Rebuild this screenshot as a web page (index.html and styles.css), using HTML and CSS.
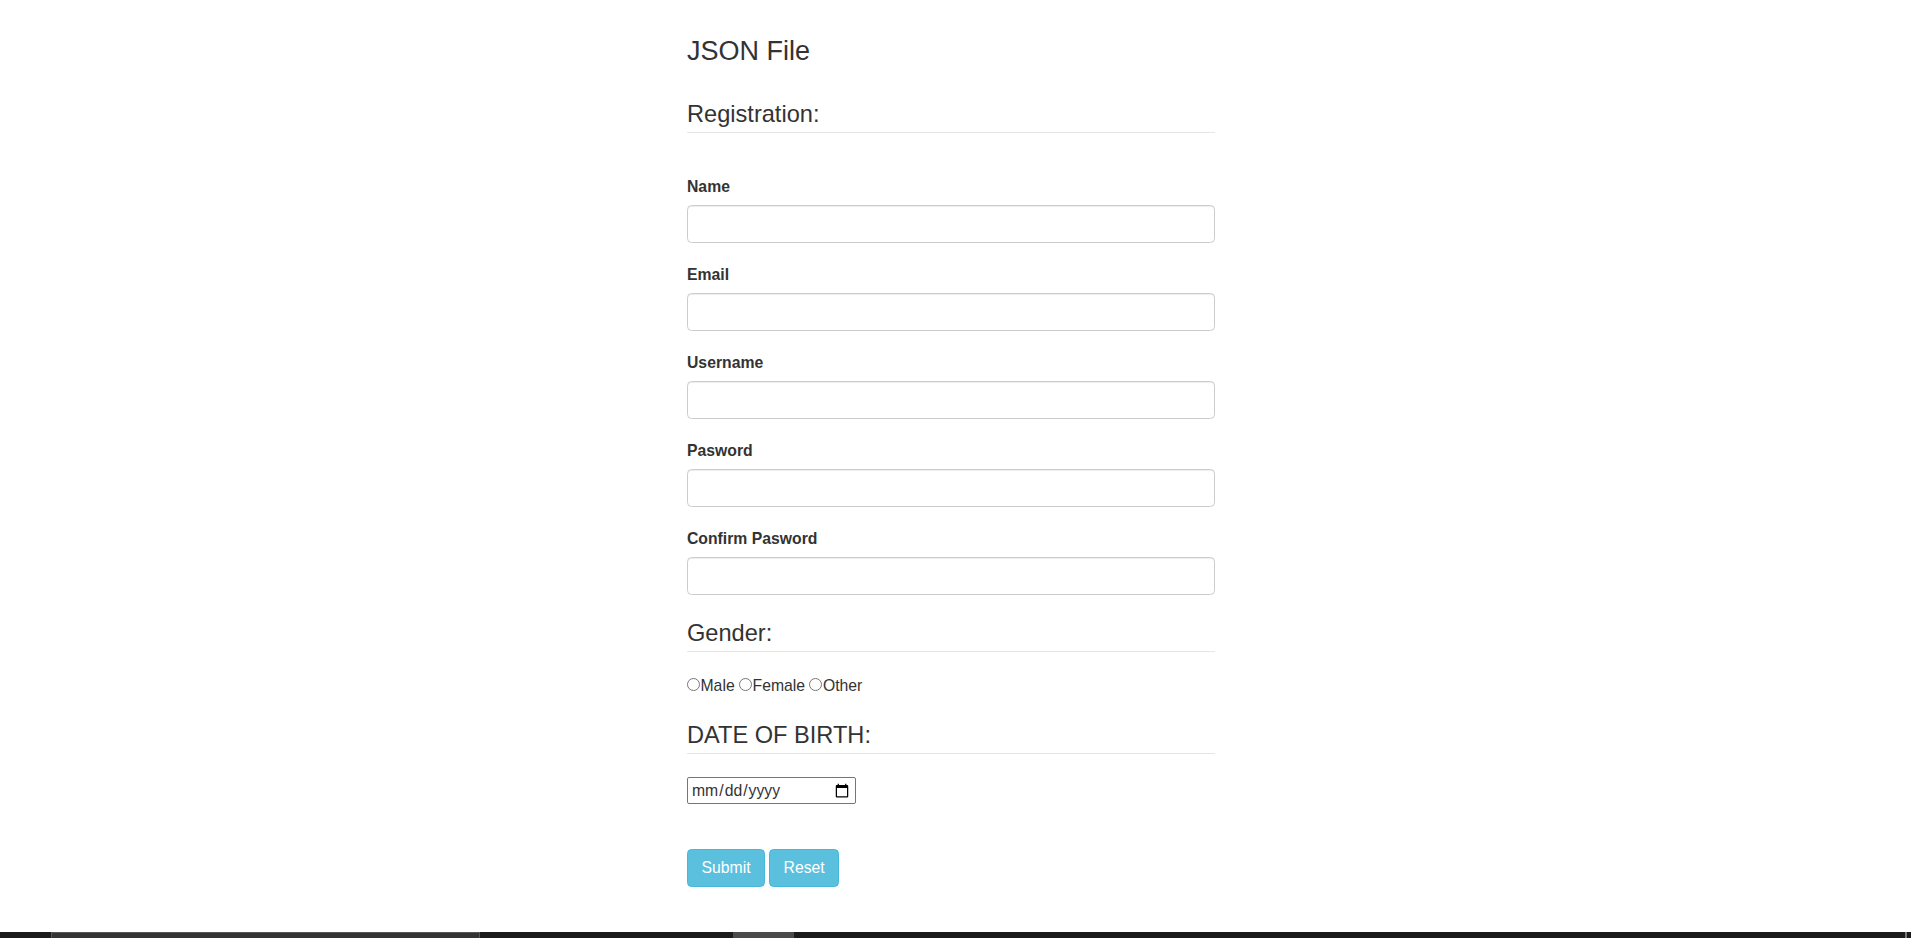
FILE: index.html
```html
<!DOCTYPE html>
<html lang="en">
<head>
<meta charset="utf-8">
<title>JSON File</title>
<link rel="stylesheet" href="styles.css">
</head>
<body>
<main class="page">
  <h3 class="title">JSON File</h3>
  <form class="form">
    <div class="legend legend-first">Registration:</div>
    <div class="groups">
      <div class="group">
        <label class="label" for="name">Name</label>
        <input class="control" id="name" type="text">
      </div>
      <div class="group">
        <label class="label" for="email">Email</label>
        <input class="control" id="email" type="email">
      </div>
      <div class="group">
        <label class="label" for="user">Username</label>
        <input class="control" id="user" type="text">
      </div>
      <div class="group">
        <label class="label" for="pw">Pasword</label>
        <input class="control" id="pw" type="password">
      </div>
      <div class="group">
        <label class="label" for="pw2">Confirm Pasword</label>
        <input class="control" id="pw2" type="password">
      </div>
    </div>
    <div class="legend legend-gender">Gender:</div>
    <div class="radios"><input class="radio" type="radio" name="g">Male <input class="radio" type="radio" name="g">Female <input class="radio" type="radio" name="g">Other</div>
    <div class="legend legend-dob">DATE OF BIRTH:</div>
    <div class="date-row"><input class="date" type="date"></div>
    <div class="actions">
      <button class="btn" type="submit">Submit</button>
      <button class="btn" type="reset">Reset</button>
    </div>
  </form>
</main>
<footer class="taskbar">
  <span class="seg seg-a"></span>
  <span class="seg seg-b"></span>
  <span class="seg seg-c"></span>
  <span class="seg seg-d"></span>
  <span class="seg seg-e"></span>
  <span class="seg seg-f"></span>
  <span class="seg seg-g"></span>
</footer>
</body>
</html>
```
FILE: styles.css
```css
html, body {
  margin: 0;
  padding: 0;
  background: #fff;
}
body {
  min-height: 100vh;
  display: flex;
  flex-direction: column;
  font-family: "Liberation Sans", Arial, sans-serif;
  font-size: 15.75px;
  line-height: 22.5px;
  color: #333;
}
.page {
  width: 528px;
  margin-left: 687px;
  flex: 1 0 auto;
}
.title {
  margin: 35.7px 0 0;
  font-size: 27px;
  line-height: 30px;
  font-weight: 500;
}
.form {
  margin: 0;
}
.legend {
  font-size: 23.6px;
  line-height: 36px;
  height: 36px;
  border-bottom: 1px solid #e5e5e5;
}
.legend-first { margin-top: 30.5px; }
.legend-gender { margin-top: 3px; }
.legend-dob { margin-top: 19.8px; }
.groups {
  margin-top: 39px;
  display: flex;
  flex-direction: column;
}
.group {
  padding-top: 4px;
  margin-bottom: 17px;
  display: flex;
  flex-direction: column;
}
.label {
  display: block;
  font-weight: bold;
  line-height: 22.5px;
  margin-bottom: 6.5px;
}
.control {
  display: block;
  box-sizing: border-box;
  width: 528px;
  height: 38px;
  margin: 0;
  padding: 6px 13.5px;
  font: inherit;
  color: #555;
  background: #fff;
  border: 1px solid #ccc;
  border-radius: 4.5px;
  box-shadow: inset 0 1px 1px rgba(0, 0, 0, 0.075);
}
.radios {
  margin-top: 23px;
  line-height: 22.5px;
  height: 22.5px;
}
.radio {
  width: 13px;
  height: 13px;
  margin: 0 0.5px 0 0;
  vertical-align: baseline;
}
.date-row {
  margin-top: 22.7px;
  height: 28px;
}
.date {
  box-sizing: border-box;
  width: 169px;
  height: 27px;
  margin: 0;
  padding: 0 3px;
  font-family: "Liberation Sans", Arial, sans-serif;
  font-size: 15.75px;
  color: #333;
  border: 1px solid #767676;
  border-radius: 2px;
  background: #fff;
}
.actions {
  margin-top: 44.3px;
  display: flex;
  gap: 4px;
}
.btn {
  height: 38px;
  margin: 0;
  padding: 0 13.5px;
  font-family: "Liberation Sans", Arial, sans-serif;
  font-size: 15.75px;
  color: #fff;
  background: #5bc0de;
  border: 1px solid #46b8da;
  border-radius: 4.5px;
}
.taskbar {
  flex: 0 0 6px;
  height: 6px;
  display: flex;
  background: #1b1b1b;
}
.seg { display: block; height: 6px; }
.seg-a { width: 51px; }
.seg-b {
  width: 429px;
  box-sizing: border-box;
  background: #333;
  border: 1px solid #555;
  border-bottom: 0;
}
.seg-c { width: 253px; }
.seg-d { width: 61px; background: #4a4a4a; }
.seg-e { flex: 1; }
.seg-f { width: 2px; background: #777; }
.seg-g { width: 4px; }
```
